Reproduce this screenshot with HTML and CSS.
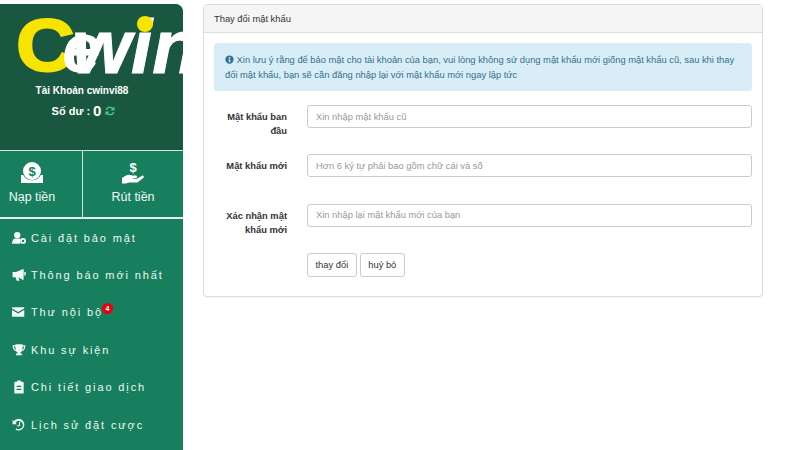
FILE: index.html
```html
<!DOCTYPE html>
<html lang="vi">
<head>
    <meta charset="UTF-8">
    <title>Thay đổi mật khẩu</title>
    <link rel="stylesheet" href="styles.css">
</head>
<body>
    <div class="page">
        <aside class="sidebar">
            <div class="profile">
                <div class="logo">
                    <span class="logo-c">C</span>
                    <span class="logo-e">e</span>
                    <span class="logo-win">win</span>
                    <span class="logo-dot"></span>
                </div>
                <div class="account">Tài Khoản <span class="account-name">cwinvi88</span></div>
                <div class="balance">
                    Số dư : <span class="balance-num">0</span>
                    <svg class="refresh" viewBox="0 0 24 24"><path d="M3 10a9 9 0 0 1 15-4l3-3v8h-8l3-3a6 6 0 0 0-10 2zM21 14a9 9 0 0 1-15 4l-3 3v-8h8l-3 3a6 6 0 0 0 10-2z"/></svg>
                </div>
            </div>
            <div class="wallet">
                <a class="wallet-btn">
                    <svg class="wallet-icon" viewBox="0 0 24 24"><path fill-rule="evenodd" d="M12 1a9 9 0 1 1 0 18a9 9 0 0 1 0-18zM1 14h2.200a10 10 0 0 0 17.600 0H23v8H1z"/><text x="12" y="14.500" class="wallet-dollar">$</text></svg>
                    <span>Nạp tiền</span>
                </a>
                <a class="wallet-btn">
                    <svg class="wallet-icon" viewBox="0 0 24 24"><path d="M1 17l4-2.500c2-1 4-1 6 0h4c1.500 0 1.500 2.500 0 2.500h-3v.8h4l5-3c1.500-.8 2.500 1 1.500 2l-6 4.700H8l-3 1H1z"/><text x="12" y="11" class="wallet-dollar-light">$</text></svg>
                    <span>Rút tiền</span>
                </a>
            </div>
            <nav class="menu">
                <a class="menu-item">
                    <svg class="menu-icon" viewBox="0 0 24 24"><circle cx="9" cy="7" r="5.500"/><path d="M0 22c0-6 3-9 6-9h6c2 0 3 1 3 2l-1 7z"/><circle cx="19" cy="17" r="5"/><circle cx="19" cy="17" r="2" class="hole"/></svg>
                    Cài đặt bảo mật
                </a>
                <a class="menu-item">
                    <svg class="menu-icon" viewBox="0 0 24 24"><path d="M1 7h6l11-5h2v18h-2l-7-4 2 6H8l-2-6H1z"/><path d="M21 7h2.500v6H21z"/></svg>
                    Thông báo mới nhất
                </a>
                <a class="menu-item">
                    <svg class="menu-icon" viewBox="0 0 24 24"><path d="M0 4h21v2L10.500 12 0 6zM0 8.500l10.500 6 10.500-6V20H0z"/></svg>
                    Thư nội bộ<span class="badge">4</span>
                </a>
                <a class="menu-item">
                    <svg class="menu-icon" viewBox="0 0 24 24"><path fill-rule="evenodd" d="M6 2h12v2h5c0 6-2 9-6 10-1 1-3 2-3 4h3v3H7v-3h3c0-2-2-3-3-4-4-1-6-4-6-10h5zM3.500 6c.2 3 1 5 3 6l-1-6zM20.500 6h-2l-1 6c2-1 3-3 3-6z"/></svg>
                    Khu sự kiện
                </a>
                <a class="menu-item">
                    <svg class="menu-icon" viewBox="0 0 24 24"><path fill-rule="evenodd" d="M9 1h6v2h3a2 2 0 0 1 2 2v18H4V5a2 2 0 0 1 2-2h3zM8 10v2h8v-2zM8 15v2h8v-2z"/></svg>
                    Chi tiết giao dịch
                </a>
                <a class="menu-item">
                    <svg class="menu-icon" viewBox="0 0 24 24"><path d="M1 3l2 2.500A10 10 0 1 1 6 20l1.500-2.500A7 7 0 1 0 6 8l2.500 2.500H1z"/><path d="M12 7h2v6l-4 2-1-2 3-1.500z"/></svg>
                    Lịch sử đặt cược
                </a>
            </nav>
        </aside>
        <main class="content">
            <section class="panel">
                <div class="panel-heading">Thay đổi mật khẩu</div>
                <div class="panel-body">
                    <div class="alert">
                        <svg class="alert-icon" viewBox="0 0 24 24"><path fill-rule="evenodd" d="M12 1a11 11 0 1 1 0 22a11 11 0 0 1 0-22zM10 5v4h4V5zM10 11v8h4v-8z"/></svg>
                        Xin lưu ý rằng để bảo mật cho tài khoản của bạn, vui lòng không sử dụng mật khẩu mới giống mật khẩu cũ, sau khi thay đổi mật khẩu, bạn sẽ cần đăng nhập lại với mật khẩu mới ngay lập tức
                    </div>
                    <form class="form">
                        <div class="form-row">
                            <label class="form-label">Mật khẩu ban đầu</label>
                            <input class="form-input" type="password" placeholder="Xin nhập mật khẩu cũ">
                        </div>
                        <div class="form-row">
                            <label class="form-label">Mật khẩu mới</label>
                            <input class="form-input" type="password" placeholder="Hơn 6 ký tự phải bao gồm chữ cái và số">
                        </div>
                        <div class="form-row">
                            <label class="form-label">Xác nhận mật khẩu mới</label>
                            <input class="form-input" type="password" placeholder="Xin nhập lại mật khẩu mới của bạn">
                        </div>
                        <div class="form-actions">
                            <button class="btn" type="button">thay đổi</button>
                            <button class="btn" type="button">huỷ bỏ</button>
                        </div>
                    </form>
                </div>
            </section>
        </main>
    </div>
</body>
</html>
```
FILE: styles.css
```css
* {
    box-sizing: border-box;
}
body {
    margin: 0;
    height: 450px;
    overflow: hidden;
    background: #fff;
    font-family: "Liberation Sans", Arial, sans-serif;
    font-size: 9.350px;
    color: #333;
}
.page {
    display: flex;
    align-items: flex-start;
    gap: 20px;
    padding-top: 4px;
}
.sidebar {
    width: 183px;
    height: 446px;
    flex: none;
    overflow: hidden;
    background: #177f5e;
    border-top-right-radius: 8px;
    color: #fff;
}
.profile {
    height: 146px;
    background: #1a5740;
    text-align: center;
    font-weight: bold;
}
.logo {
    position: relative;
    height: 76px;
    overflow: hidden;
}
.logo span {
    position: absolute;
    line-height: 1;
}
.logo-c {
    left: 16px;
    top: 5px;
    font-size: 74px;
    font-weight: bold;
    color: #f7e400;
    -webkit-text-stroke: 2px #f7e400;
    transform: scaleX(1.1);
    transform-origin: left;
}
.logo-e {
    left: 62px;
    top: 9px;
    font-size: 70px;
    font-weight: bold;
    font-style: italic;
    color: #fff;
}
.logo-win {
    left: 72px;
    top: 5px;
    font-size: 76px;
    font-style: italic;
    font-weight: bold;
    color: #fff;
    -webkit-text-stroke: 1px #fff;
}
.logo-dot {
    left: 137px;
    top: 12px;
    width: 16px;
    height: 16px;
    border-radius: 50%;
    background: #f7e400;
}
.account {
    margin-top: 5px;
    padding-right: 19px;
    font-size: 10px;
}
.account-name {
    font-size: 10px;
}
.balance {
    display: flex;
    align-items: center;
    justify-content: center;
    gap: 3px;
    margin-top: 6px;
    padding-right: 15px;
    font-size: 11px;
}
.balance-num {
    font-size: 15px;
}
.refresh {
    width: 12px;
    height: 12px;
    fill: #3fd08f;
}
.wallet {
    display: flex;
    height: 69px;
    border-top: 1px solid #cfe5dc;
    border-bottom: 2px solid #e4f1ec;
}
.wallet-btn {
    display: flex;
    flex-direction: column;
    align-items: center;
    padding-top: 10px;
    font-size: 12.500px;
    color: #f0f8f5;
}
.wallet-btn:first-child {
    width: 83px;
    padding-right: 18px;
    border-right: 1px solid #cfe5dc;
}
.wallet-btn:last-child {
    flex: 1;
}
.wallet-icon {
    width: 24px;
    height: 24px;
    margin-bottom: 5px;
    fill: #fff;
}
.wallet-dollar {
    font-size: 13px;
    font-weight: bold;
    text-anchor: middle;
    fill: #177f5e;
}
.wallet-dollar-light {
    font-size: 13px;
    font-weight: bold;
    text-anchor: middle;
    fill: #fff;
}
.menu {
    display: flex;
    flex-direction: column;
}
.menu-item {
    display: flex;
    align-items: center;
    gap: 5px;
    height: 37.400px;
    padding-left: 12px;
    font-size: 11px;
    letter-spacing: 1.870px;
    color: #eef7f3;
}
.menu-icon {
    width: 14px;
    height: 14px;
    flex: none;
    fill: #f2f8f5;
}
.menu-icon .hole {
    fill: #177f5e;
}
.badge {
    width: 11px;
    height: 11px;
    margin: -7px 0 0 -6px;
    border-radius: 50%;
    background: #e8000f;
    font-size: 7px;
    font-weight: bold;
    letter-spacing: 0;
    line-height: 11px;
    text-align: center;
    color: #fff;
}
.content {
    width: 560px;
    flex: none;
}
.panel {
    height: 293px;
    border: 1px solid #ddd;
    border-radius: 4px;
    box-shadow: 0 1px 1px rgba(0, 0, 0, 0.05);
}
.panel-heading {
    height: 28px;
    padding: 0 10px;
    background: #f5f5f5;
    border-bottom: 1px solid #ddd;
    line-height: 28px;
}
.panel-body {
    padding: 10px;
}
.alert {
    height: 48px;
    padding: 10px 11px;
    background: #d9edf7;
    border-radius: 3px;
    line-height: 14.500px;
    color: #31708f;
}
.alert-icon {
    width: 9px;
    height: 9px;
    fill: #31708f;
    vertical-align: -1px;
}
.form {
    display: flex;
    flex-direction: column;
    margin-top: 14px;
}
.form-row {
    display: flex;
    align-items: flex-start;
    gap: 20px;
    height: 49.300px;
}
.form-label {
    width: 73px;
    padding-top: 5px;
    text-align: right;
    font-weight: bold;
    line-height: 14px;
}
.form-input {
    flex: 1;
    height: 23px;
    padding: 0 8px;
    border: 1px solid #ccc;
    border-radius: 3px;
    background: #fff;
    font-family: inherit;
    font-size: 9.350px;
}
.form-input::placeholder {
    color: #999;
}
.form-actions {
    display: flex;
    gap: 3px;
    margin-left: 93px;
}
.btn {
    height: 24px;
    padding: 0 7.500px;
    border: 1px solid #ccc;
    border-radius: 3px;
    background: #fff;
    font-family: inherit;
    font-size: 9.350px;
    color: #333;
}
```
